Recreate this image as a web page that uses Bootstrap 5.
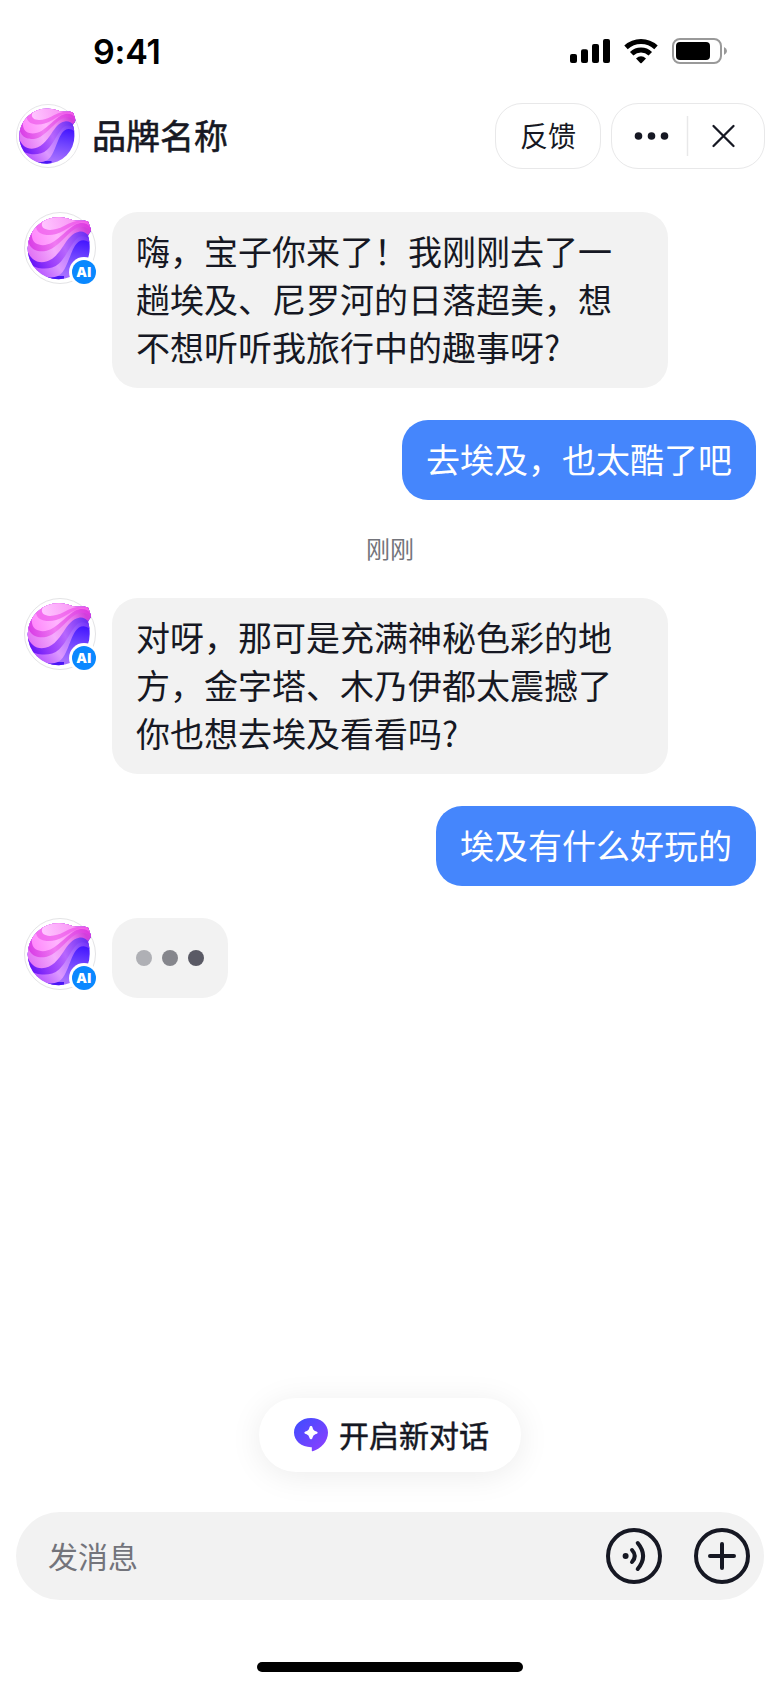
<!DOCTYPE html>
<html lang="zh-CN">
<head>
<meta charset="utf-8">
<meta name="viewport" content="width=device-width, initial-scale=1">
<title>品牌名称</title>
<link href="https://cdn.jsdelivr.net/npm/bootstrap@5.3.0/dist/css/bootstrap.min.css" rel="stylesheet">
<style>
  body { font-family: "Noto Sans CJK SC", sans-serif; color: #161823; background: #fff; }
  .screen { width: 780px; height: 1688px; overflow: hidden; }
  .status { height: 95px; padding: 6px 52px 0 93px; }
  .clock { font: 600 34px/1 Inter, sans-serif; letter-spacing: -.2px; color: #000; padding-top: 2px; }
  .topbar { height: 82px; padding: 0 15px 0 16px; }
  .brand-name { font-size: 34px; line-height: 48px; margin-left: 12px; padding-bottom: 2px; -webkit-text-stroke: .6px #161823; }
  .chip { height: 66px; border: 1.5px solid #e8e8e9; border-radius: 27px; background: #fff; color: #161823; padding: 0; }
  .chip-text { width: 106px; font-size: 28px; line-height: 40px; padding-bottom: 2px; }
  .chip-pair { width: 154px; margin-left: 10px; }
  .chat { padding: 35px 24px 0; }
  .avatar { width: 72px; height: 72px; flex: none; margin-right: 16px; }
  .bubble { border-radius: 26px; padding: 15px 24px 17px; font-size: 34px; line-height: 48px; white-space: nowrap; }
  .bubble-ai { background: #f2f2f2; width: 556px; }
  .bubble-me { background: #4586fc; color: #fff; }
  .typing { width: 116px; height: 80px; gap: 10px; padding: 16px 24px; }
  .typing i { width: 16px; height: 16px; border-radius: 50%; background: #5a5a65; }
  .typing i:nth-child(1) { background: #afb0b5; }
  .typing i:nth-child(2) { background: #85868c; }
  .gap-msg { margin-top: 32px; }
  .stamp { font-size: 24px; line-height: 34px; margin: 31px 0 33px; color: #73747b; }
  .new-chat { height: 74px; width: 262px; border: 0; border-radius: 37px; background: #fff; color: #161823; font-size: 30px; line-height: 42px; padding: 0 0 0 35px; margin-bottom: 40px; box-shadow: 0 4px 32px rgba(0,0,0,.08); -webkit-text-stroke: .5px #161823; }
  .new-chat span { margin-left: 11px; padding-bottom: 3px; }
  .composer { height: 88px; border-radius: 44px; background: #f2f2f2; margin: 0 16px; padding: 0 14px 0 32px; font-size: 30px; color: #73747b; }
  .composer span { padding-bottom: 2px; }
  .home-area { height: 88px; padding-bottom: 16px; }
  .home-bar { width: 266px; height: 10px; border-radius: 5px; background: #000; }
</style>
</head>
<body>
<svg width="0" height="0" class="position-absolute" aria-hidden="true">
  <defs>
    <clipPath id="ball"><path d="M34.700 5.200C42 5 48 8.600 54 8.800C59 8.800 62 8.300 64 9.600C65 12 66.600 16 67 18.600C66 21 64 22.400 64 24C65.400 28 65.800 32 65.700 36A31 31 0 1 1 34.700 5.200Z"/></clipPath>
    <linearGradient id="g0" gradientUnits="userSpaceOnUse" x1="58" y1="28" x2="50" y2="64"><stop offset="0" stop-color="#4315ff"/><stop offset=".5" stop-color="#7246ff"/><stop offset="1" stop-color="#a56eff"/></linearGradient>
    <linearGradient id="g1" gradientUnits="userSpaceOnUse" x1="12" y1="60" x2="60" y2="24"><stop offset="0" stop-color="#b552ff"/><stop offset=".35" stop-color="#dc98ff"/><stop offset=".65" stop-color="#b978ff"/><stop offset="1" stop-color="#7a3bf8"/></linearGradient>
    <linearGradient id="g2" gradientUnits="userSpaceOnUse" x1="4" y1="46" x2="62" y2="22"><stop offset="0" stop-color="#6213f6"/><stop offset=".3" stop-color="#9a3cfb"/><stop offset=".6" stop-color="#b766fd"/><stop offset="1" stop-color="#6c30f3"/></linearGradient>
    <linearGradient id="g3" gradientUnits="userSpaceOnUse" x1="6" y1="46" x2="62" y2="18"><stop offset="0" stop-color="#e070f4"/><stop offset=".4" stop-color="#f5abfd"/><stop offset=".7" stop-color="#ef8df2"/><stop offset="1" stop-color="#d23fdc"/></linearGradient>
    <linearGradient id="g4" gradientUnits="userSpaceOnUse" x1="6" y1="32" x2="64" y2="15"><stop offset="0" stop-color="#d93fe6"/><stop offset=".4" stop-color="#f07af2"/><stop offset="1" stop-color="#dc3be1"/></linearGradient>
    <linearGradient id="g5" gradientUnits="userSpaceOnUse" x1="8" y1="28" x2="62" y2="9"><stop offset="0" stop-color="#ff86fc"/><stop offset=".45" stop-color="#ffb6fe"/><stop offset="1" stop-color="#f05de9"/></linearGradient>
    <linearGradient id="g6" gradientUnits="userSpaceOnUse" x1="20" y1="16" x2="52" y2="7"><stop offset="0" stop-color="#ffc4ff"/><stop offset="1" stop-color="#f895f5"/></linearGradient>
    <linearGradient id="gp" x1="0" y1="0" x2="1" y2="1"><stop offset="0" stop-color="#3b4dff"/><stop offset="1" stop-color="#913fff"/></linearGradient>
    <symbol id="orb" viewBox="0 0 72 72">
      <circle cx="36" cy="36" r="35.500" fill="#fff" stroke="#e3e3e5"/>
      <g clip-path="url(#ball)">
        <path fill="url(#g0)" d="M0 0H72V72H0Z"/>
        <path fill="#4a16f6" d="M24 64H40V72H24Z"/>
        <path fill="url(#g1)" d="M0 0H72V33L66 31C62 27.500 58 27.500 55 29.500C50 33 48 40 45 47C41 57 38 65.500 27 65.500C22 65.500 16 64 10 60H0Z"/>
        <path fill="url(#g2)" d="M0 0H72V29L66 28C61 23 56 23.500 52.500 27C46 34 42 45 35 51.500C30 56 24 57 18 56.500C11 56 5 53 0 47Z"/>
        <path fill="url(#g3)" d="M0 0H72V26L66 25C62 20 58 19 55 19.700C48 21 44 27 40 33C34 42 28 50 17.700 50.300C11 50 6 46 3 38L0 36Z"/>
        <path fill="url(#g4)" d="M0 0H72V19L66 18C61 14 56 14 51 17C43 22 36 32 28 36.500C22 40 15 40 11 38C7 36 5 33 3 27Z"/>
        <path fill="url(#g5)" d="M0 0H72V18L66 15C63 10 56 10 51 12.700C43 17.500 36 26 29 30C24 33 19 33.800 15 32.600C9 31 7 26 8 18Z"/>
        <path fill="#ec55ea" opacity=".65" d="M12 14L20 4L67 8V10C54 8.500 48 14 40 18.500C33 22.500 26 24 20 22.500C15 21.500 12 18 12 14Z"/>
        <path fill="url(#g6)" d="M24 0H50L60 8.800C50 8 46 11 40 14C35 16.500 31 17.800 26 17.900C19 18 16.500 14 18.500 10Z"/>
      </g>
    </symbol>
    <symbol id="orb-ai" viewBox="0 0 72 72">
      <use href="#orb" width="72" height="72"/>
      <circle cx="60" cy="60" r="15" fill="#fff"/>
      <circle cx="60" cy="60" r="12" fill="#0a88ff"/>
      <text x="60" y="65" text-anchor="middle" font-family="Open Sans, sans-serif" font-weight="800" font-size="14" fill="#fff">AI</text>
    </symbol>
  </defs>
</svg>

<main class="screen d-flex flex-column">
  <div class="status d-flex justify-content-between align-items-center flex-shrink-0">
    <span class="clock">9:41</span>
    <svg width="160" height="28" viewBox="0 0 160 28">
      <g><rect x="2" y="17" width="7" height="9" rx="2"/><rect x="13" y="12.300" width="7" height="13.700" rx="2"/><rect x="24" y="7" width="7" height="19" rx="2"/><rect x="35" y="2" width="7" height="24" rx="2"/></g>
      <g transform="translate(73 26.500)" fill="none" stroke="#000" stroke-width="5">
        <path d="M-15 -16.200A22 22 0 0 1 15 -16.200"/><path d="M-9.300 -9.800A13.500 13.500 0 0 1 9.300 -9.800"/>
        <path fill="#000" stroke="none" d="M-5 -5.100Q0 -9.300 5 -5.100L.7 -.6Q0 0 -.7 -.6Z"/>
      </g>
      <rect x="105" y="2" width="48" height="24" rx="7" fill="none" stroke="#999" stroke-width="2"/>
      <rect x="108" y="5" width="34" height="18" rx="4"/>
      <path d="M156 10Q159 11.500 159 14T156 18Z" fill="#999"/>
    </svg>
  </div>

  <header class="topbar d-flex align-items-center flex-shrink-0">
    <svg width="64" height="64"><use href="#orb" width="64" height="64"/></svg>
    <span class="brand-name me-auto">品牌名称</span>
    <button class="chip chip-text">反馈</button>
    <div class="chip chip-pair d-flex align-items-center">
      <svg width="151" height="62" viewBox="612.5 105 151 62">
        <g fill="#161823"><circle cx="639" cy="136" r="3.800"/><circle cx="652" cy="136" r="3.800"/><circle cx="665" cy="136" r="3.800"/></g>
        <path d="M688 116V156" stroke="#e8e8e9" stroke-width="1.500"/>
        <path d="M714 126L734 146M734 126L714 146" stroke="#161823" stroke-width="2.300" stroke-linecap="round"/>
      </svg>
    </div>
  </header>

  <section class="chat flex-grow-1">
    <div class="d-flex">
      <svg class="avatar"><use href="#orb-ai" width="72" height="72"/></svg>
      <div class="bubble bubble-ai">嗨，宝子你来了！我刚刚去了一<br>趟埃及、尼罗河的日落超美，想<br>不想听听我旅行中的趣事呀?</div>
    </div>
    <div class="d-flex justify-content-end gap-msg"><div class="bubble bubble-me">去埃及，也太酷了吧</div></div>
    <div class="stamp text-center">刚刚</div>
    <div class="d-flex">
      <svg class="avatar"><use href="#orb-ai" width="72" height="72"/></svg>
      <div class="bubble bubble-ai">对呀，那可是充满神秘色彩的地<br>方，金字塔、木乃伊都太震撼了<br>你也想去埃及看看吗?</div>
    </div>
    <div class="d-flex justify-content-end gap-msg"><div class="bubble bubble-me">埃及有什么好玩的</div></div>
    <div class="d-flex gap-msg">
      <svg class="avatar"><use href="#orb-ai" width="72" height="72"/></svg>
      <div class="bubble bubble-ai typing d-flex align-items-center"><i></i><i></i><i></i></div>
    </div>
  </section>

  <button class="new-chat d-flex align-items-center align-self-center flex-shrink-0">
    <svg width="34" height="34" viewBox="0 0 34 34">
      <path fill="url(#gp)" d="M17 0C26.500 0 34 6 34 14.500C34 23.500 27 30.500 18.800 33.200Q17.800 33.500 17.800 32.500V29.200H17C7.500 29.200 0 23 0 14.600S7.500 0 17 0Z"/>
      <path fill="#fff" d="M17 8Q18 7.800 18.300 8.800C19.200 12 19.700 12.700 23 13.700Q24.500 14.700 23 15.700C19.700 16.700 19.200 17.400 18.300 20.600Q17 22.200 15.700 20.600C14.800 17.400 14.300 16.700 11 15.700Q9.500 14.700 11 13.700C14.300 12.700 14.800 12 15.700 8.800Q16 7.800 17 8Z"/>
    </svg>
    <span>开启新对话</span>
  </button>

  <div class="composer d-flex align-items-center flex-shrink-0">
    <span class="me-auto">发消息</span>
    <svg width="144" height="56" viewBox="0 0 144 56" fill="none" stroke="#161823" stroke-width="4" stroke-linecap="round">
      <circle cx="28" cy="28" r="26"/><circle cx="19.600" cy="28" r="3" fill="#161823" stroke="none"/>
      <path d="M26 22Q31.500 28 26 34M31.700 15Q42.500 28 31.700 41"/>
      <circle cx="116" cy="28" r="26"/><path d="M104 28H128M116 16V40"/>
    </svg>
  </div>
  <div class="home-area d-flex justify-content-center align-items-end flex-shrink-0"><div class="home-bar"></div></div>
</main>
<script src="https://cdn.jsdelivr.net/npm/bootstrap@5.3.0/dist/js/bootstrap.bundle.min.js"></script>
</body>
</html>
